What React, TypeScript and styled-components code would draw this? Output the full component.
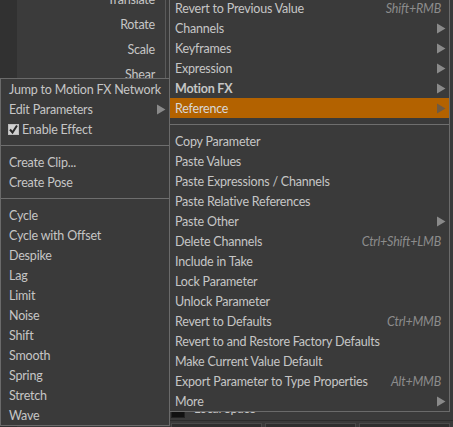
import React from 'react';
import styled, { createGlobalStyle } from 'styled-components';

const GlobalStyle = createGlobalStyle`
  html, body {
    margin: 0;
    padding: 0;
    background: #3a3a3a;
    overflow: hidden;
  }
  body {
    font-family: Lato, 'Liberation Sans', sans-serif;
    font-size: 12.5px;
    letter-spacing: -0.2px;
    color: #c6c6c6;
  }
`;

const Screen = styled.div`
  position: relative;
  width: 453px;
  height: 427px;
  overflow: hidden;
  display: flex;
  background: #3a3a3a;
`;

const SideStrip = styled.div`
  width: 17px;
  background: #313131;
`;

const LabelPanel = styled.div`
  width: 149px;
  height: 100%;
  border-right: 1px solid #5a5a5a;
  background: #3b3b3b;
  display: flex;
  flex-direction: column;
  align-items: flex-end;
  gap: 5px;
  padding: 0 10px 0 0;
  margin-top: -10px;
  box-sizing: border-box;
`;

const ParamLabel = styled.div`
  height: 20px;
  line-height: 20px;
`;

const Workspace = styled.div`
  flex: 1;
  display: flex;
  flex-direction: column;
  justify-content: flex-end;
`;

const ToggleRow = styled.div`
  display: flex;
  align-items: center;
  gap: 9px;
  height: 14px;
  padding-left: 5px;
  margin-top: -4px;
`;

const BlackBox = styled.div`
  width: 12px;
  height: 7px;
  background: #111;
  border: 1px solid #222;
`;

const ToggleText = styled.span`
  line-height: 14px;
  margin-top: -9px;
`;

const FieldRow = styled.div`
  display: flex;
  gap: 3px;
  padding: 2px 0 0 5px;
  border-top: 1px solid #2c2c2c;
  height: 4px;
`;

const Field = styled.div`
  width: 89px;
  background: #2e2e2e;
  border: 1px solid #4a4a4a;
  border-bottom: none;
`;

const Menu = styled.div<{ $left: number; $top: number; $width: number }>`
  position: absolute;
  left: ${p => p.$left}px;
  top: ${p => p.$top}px;
  width: ${p => p.$width}px;
  box-sizing: border-box;
  background: #3a3a3a;
  border: 1px solid #6a6a6a;
  display: flex;
  flex-direction: column;
`;

const Row = styled.div<{ $active?: boolean; $indent: number }>`
  height: 20px;
  display: flex;
  align-items: center;
  padding: 0 3px 0 ${p => p.$indent}px;
  background: ${p => (p.$active ? '#b36200' : 'transparent')};
  color: ${p => (p.$active ? '#d8d8d8' : '#c6c6c6')};
  white-space: nowrap;
`;

const Label = styled.span<{ $bold?: boolean }>`
  flex: 1;
  font-weight: ${p => (p.$bold ? 700 : 400)};
`;

const Shortcut = styled.span`
  font-style: italic;
  color: #8c8c8c;
  padding-right: 5px;
`;

const Separator = styled.div`
  height: 13px;
  display: flex;
  align-items: center;
  &::after {
    content: '';
    flex: 1;
    height: 1px;
    background: #6e6e6e;
  }
`;

const Check = styled.svg`
  width: 11px;
  height: 11px;
  margin-right: 3px;
  flex-shrink: 0;
`;

const Arrow = ({ dim }: { dim?: boolean }) => (
  <svg width="10" height="11" viewBox="0 0 10 11">
    <polygon points="1,0.5 9.5,5.5 1,10.5" fill={dim ? '#6e5a44' : '#8a8a8a'} />
  </svg>
);

type Item =
  | { sep: true }
  | { sep?: false; label: string; shortcut?: string; sub?: boolean; bold?: boolean; active?: boolean; check?: boolean };

const leftItems: Item[] = [
  { label: 'Jump to Motion FX Network' },
  { label: 'Edit Parameters', sub: true },
  { label: 'Enable Effect', check: true },
  { sep: true },
  { label: 'Create Clip...' },
  { label: 'Create Pose' },
  { sep: true },
  ...['Cycle', 'Cycle with Offset', 'Despike', 'Lag', 'Limit', 'Noise', 'Shift', 'Smooth', 'Spring', 'Stretch', 'Wave'].map(
    label => ({ label })
  ),
];

const rightItems: Item[] = [
  { label: 'Revert to Previous Value', shortcut: 'Shift+RMB' },
  { label: 'Channels', sub: true },
  { label: 'Keyframes', sub: true },
  { label: 'Expression', sub: true },
  { label: 'Motion FX', sub: true, bold: true },
  { label: 'Reference', sub: true, active: true },
  { sep: true },
  { label: 'Copy Parameter' },
  { label: 'Paste Values' },
  { label: 'Paste Expressions / Channels' },
  { label: 'Paste Relative References' },
  { label: 'Paste Other', sub: true },
  { label: 'Delete Channels', shortcut: 'Ctrl+Shift+LMB' },
  { label: 'Include in Take' },
  { label: 'Lock Parameter' },
  { label: 'Unlock Parameter' },
  { label: 'Revert to Defaults', shortcut: 'Ctrl+MMB' },
  { label: 'Revert to and Restore Factory Defaults' },
  { label: 'Make Current Value Default' },
  { label: 'Export Parameter to Type Properties', shortcut: 'Alt+MMB' },
  { label: 'More', sub: true },
];

const MenuRows = ({ items, indent }: { items: Item[]; indent: number }) => (
  <>
    {items.map((item, i) =>
      item.sep ? (
        <Separator key={i} />
      ) : (
        <Row key={i} $active={item.active} $indent={item.check ? indent - 1 : indent}>
          {item.check && (
            <Check viewBox="0 0 11 11">
              <rect x="0.5" y="0.5" width="10" height="10" fill="#d0d0d0" stroke="#bdbdbd" />
              <polyline points="2,5.5 4.5,8.5 9,1.5" fill="none" stroke="#2a2a2a" strokeWidth="2" />
            </Check>
          )}
          <Label $bold={item.bold}>{item.label}</Label>
          {item.shortcut && <Shortcut>{item.shortcut}</Shortcut>}
          {item.sub && <Arrow dim={item.active} />}
        </Row>
      )
    )}
  </>
);

export default function App() {
  return (
    <>
      <GlobalStyle />
      <Screen>
        <SideStrip />
        <LabelPanel>
          <ParamLabel>Translate</ParamLabel>
          <ParamLabel>Rotate</ParamLabel>
          <ParamLabel>Scale</ParamLabel>
          <ParamLabel>Shear</ParamLabel>
        </LabelPanel>
        <Workspace>
          <ToggleRow>
            <BlackBox />
            <ToggleText>Local Space</ToggleText>
          </ToggleRow>
          <FieldRow>
            <Field />
            <Field />
            <Field />
          </FieldRow>
        </Workspace>

        <Menu $left={0} $top={78} $width={170}>
          <MenuRows items={leftItems} indent={8} />
        </Menu>
        <Menu $left={169} $top={-3} $width={281}>
          <MenuRows items={rightItems} indent={5} />
        </Menu>
      </Screen>
    </>
  );
}
